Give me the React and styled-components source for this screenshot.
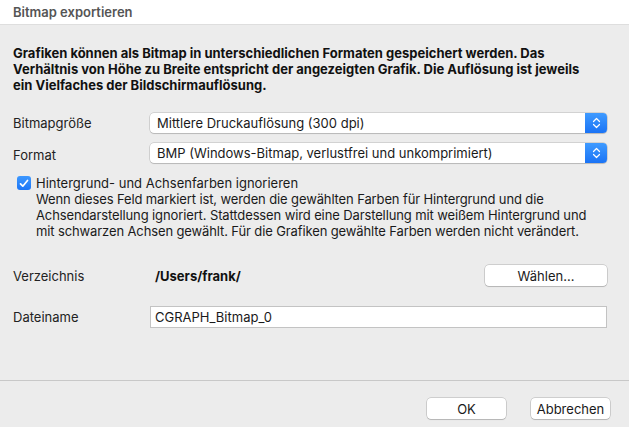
import styled, { createGlobalStyle } from 'styled-components';

const GlobalStyle = createGlobalStyle`
  html, body {
    margin: 0;
    padding: 0;
    background: #ececec;
  }
  body {
    font-family: Inter, 'Liberation Sans', Arial, sans-serif;
    font-size: 13px;
    color: #1a1a1a;
  }
`;

const Chevrons = () => (
  <svg width='9' height='12' viewBox='0 0 9 12' fill='none'>
    <path d='M1.5 4.5 L4.5 1.5 L7.5 4.5' stroke='#fff' strokeWidth='1.2' strokeLinecap='round' strokeLinejoin='round' />
    <path d='M1.5 7.5 L4.5 10.5 L7.5 7.5' stroke='#fff' strokeWidth='1.2' strokeLinecap='round' strokeLinejoin='round' />
  </svg>
);

const Check = () => (
  <svg width='10' height='9' viewBox='0 0 10 9' fill='none'>
    <path d='M1.5 4.8 L3.8 7.2 L8.5 1.5' stroke='#fff' strokeWidth='1.7' strokeLinecap='round' strokeLinejoin='round' />
  </svg>
);

const App = () => {
  return (
    <>
      <GlobalStyle />
      <StyledWindow>
        <StyledTitleBar>Bitmap exportieren</StyledTitleBar>
        <StyledBody>
          <StyledIntro>
            Grafiken können als Bitmap in unterschiedlichen Formaten gespeichert werden. Das
            <br />
            Verhältnis von Höhe zu Breite entspricht der angezeigten Grafik. Die Auflösung ist jeweils
            <br />
            ein Vielfaches der Bildschirmauflösung.
          </StyledIntro>

          <StyledRow $top={20}>
            <StyledLabel>Bitmapgröße</StyledLabel>
            <StyledSelect>
              <StyledSelectText>Mittlere Druckauflösung (300 dpi)</StyledSelectText>
              <StyledStepper><Chevrons /></StyledStepper>
            </StyledSelect>
          </StyledRow>

          <StyledRow $top={10}>
            <StyledLabel $shift={3}>Format</StyledLabel>
            <StyledSelect>
              <StyledSelectText>BMP (Windows-Bitmap, verlustfrei und unkomprimiert)</StyledSelectText>
              <StyledStepper><Chevrons /></StyledStepper>
            </StyledSelect>
          </StyledRow>

          <StyledCheckRow>
            <StyledCheckbox><Check /></StyledCheckbox>
            <StyledCheckText>
              <div>Hintergrund- und Achsenfarben ignorieren</div>
              <StyledHint>
                Wenn dieses Feld markiert ist, werden die gewählten Farben für Hintergrund und die
                <br />
                Achsendarstellung ignoriert. Stattdessen wird eine Darstellung mit weißem Hintergrund und
                <br />
                mit schwarzen Achsen gewählt. Für die Grafiken gewählte Farben werden nicht verändert.
              </StyledHint>
            </StyledCheckText>
          </StyledCheckRow>

          <StyledRow $top={26}>
            <StyledLabel>Verzeichnis</StyledLabel>
            <StyledPath>/Users/frank/</StyledPath>
            <StyledButton $width={122}>Wählen...</StyledButton>
          </StyledRow>

          <StyledRow $top={20}>
            <StyledLabel>Dateiname</StyledLabel>
            <StyledInput defaultValue='CGRAPH_Bitmap_0' />
          </StyledRow>
        </StyledBody>

        <StyledFooter>
          <StyledButton $width={79}>OK</StyledButton>
          <StyledButton $width={79}>Abbrechen</StyledButton>
        </StyledFooter>
      </StyledWindow>
    </>
  );
};

export default App;

const StyledWindow = styled.div`
  width: 629px;
  height: 427px;
  display: flex;
  flex-direction: column;
  background: #ececec;
  overflow: hidden;
`;

const StyledTitleBar = styled.div`
  height: 24px;
  flex-shrink: 0;
  display: flex;
  align-items: center;
  padding: 0 13px;
  background: #ffffff;
  border-bottom: 1px solid #dedede;
  font-size: 13px;
  font-weight: 600;
  color: #555;
`;

const StyledBody = styled.div`
  flex: 1;
  display: flex;
  flex-direction: column;
  padding: 20px 22px 0 13px;
`;

const StyledIntro = styled.p`
  margin: 0;
  font-size: 13px;
  font-weight: 700;
  line-height: 16px;
  color: #111;
  white-space: nowrap;
`;

const StyledRow = styled.div`
  display: flex;
  align-items: center;
  margin-top: ${({ $top }) => $top}px;
`;

const StyledLabel = styled.div`
  width: 137px;
  flex-shrink: 0;
  font-size: 13px;
  color: #222;
  padding-top: ${({ $shift }) => $shift || 0}px;
`;

const StyledSelect = styled.div`
  flex: 1;
  height: 20px;
  display: flex;
  align-items: stretch;
  background: #fff;
  border-radius: 4px;
  box-shadow: 0 0 0 0.5px rgba(0, 0, 0, 0.22), 0 1px 1px rgba(0, 0, 0, 0.12);
  overflow: hidden;
`;

const StyledSelectText = styled.div`
  flex: 1;
  display: flex;
  align-items: center;
  padding-left: 7px;
  font-size: 13px;
  color: #1a1a1a;
  white-space: nowrap;
`;

const StyledStepper = styled.div`
  width: 22px;
  display: flex;
  align-items: center;
  justify-content: center;
  background: linear-gradient(#3f9bff, #1a73f5);
`;

const StyledCheckRow = styled.div`
  display: flex;
  align-items: flex-start;
  gap: 5px;
  margin-top: 12px;
  padding-left: 4px;
`;

const StyledCheckbox = styled.div`
  width: 14px;
  height: 14px;
  margin-top: 1px;
  flex-shrink: 0;
  display: flex;
  align-items: center;
  justify-content: center;
  border-radius: 3px;
  background: linear-gradient(#3d98ff, #1c76f6);
`;

const StyledCheckText = styled.div`
  font-size: 13px;
  line-height: 16px;
  color: #1a1a1a;
  white-space: nowrap;
`;

const StyledHint = styled.div`
  color: #1a1a1a;
  letter-spacing: -0.12px;
`;

const StyledPath = styled.div`
  flex: 1;
  padding-left: 5px;
  font-weight: 700;
  font-size: 13px;
  color: #111;
`;

const StyledButton = styled.button`
  width: ${({ $width }) => $width}px;
  height: 21px;
  padding: 0;
  border: none;
  border-radius: 4px;
  background: #fff;
  box-shadow: 0 0 0 0.5px rgba(0, 0, 0, 0.25), 0 1px 1px rgba(0, 0, 0, 0.12);
  font-family: Inter, 'Liberation Sans', Arial, sans-serif;
  font-size: 13px;
  color: #1a1a1a;
`;

const StyledInput = styled.input`
  flex: 1;
  height: 22px;
  box-sizing: border-box;
  margin: 0;
  padding: 0 4px;
  border: 1px solid #c3c3c3;
  background: #fff;
  outline: none;
  font-family: Inter, 'Liberation Sans', Arial, sans-serif;
  font-size: 13px;
  color: #1a1a1a;
`;

const StyledFooter = styled.div`
  height: 47px;
  flex-shrink: 0;
  display: flex;
  align-items: flex-start;
  justify-content: flex-end;
  gap: 25px;
  padding: 17px 19px 0 0;
  box-sizing: border-box;
  border-top: 1px solid #c8c8c8;
`;
